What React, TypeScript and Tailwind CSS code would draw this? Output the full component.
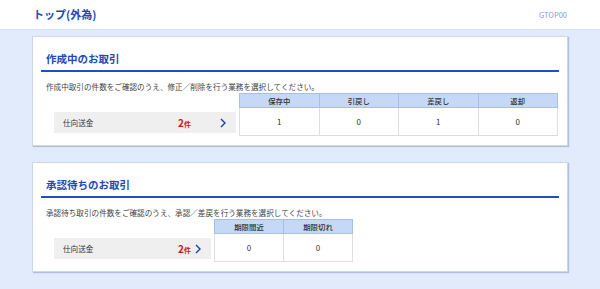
const jp = { fontFamily: '"Noto Sans CJK JP", "Noto Sans", sans-serif' }

interface Section {
  title: string
  desc: string
  boxWidth: string
  cols: { label: string; value: number }[]
  tableWidth: string
}

const sections: Section[] = [
  {
    title: "作成中のお取引",
    desc: "作成中取引の件数をご確認のうえ、修正／削除を行う業務を選択してください。",
    boxWidth: "w-[182px]",
    tableWidth: "w-[319px]",
    cols: [
      { label: "保存中", value: 1 },
      { label: "引戻し", value: 0 },
      { label: "差戻し", value: 1 },
      { label: "返却", value: 0 },
    ],
  },
  {
    title: "承認待ちのお取引",
    desc: "承認待ち取引の件数をご確認のうえ、承認／差戻を行う業務を選択してください。",
    boxWidth: "w-[157px]",
    tableWidth: "w-[139px]",
    cols: [
      { label: "期限間近", value: 0 },
      { label: "期限切れ", value: 0 },
    ],
  },
]

function Chevron() {
  return (
    <svg width="6" height="10" viewBox="0 0 6 10" fill="none" stroke="#1b3fae" strokeWidth="1.4">
      <polyline points="1,1 5,5 1,9" />
    </svg>
  )
}

function Card({ s }: { s: Section }) {
  return (
    <div className="h-[110px] bg-white border border-[#cdd6e4] shadow-[1px_1px_1px_rgba(90,110,150,0.35)] px-[8px]">
      <div className="pt-[15px] pb-[4px] border-b-2 border-[#1d4fc6] pl-[5px]">
        <div className="text-[10.5px] leading-[14px] font-bold text-[#2049b7]">{s.title}</div>
      </div>
      <div className="mt-[9px] pl-[5px] text-[7.6px] leading-[12px] text-[#444]">{s.desc}</div>
      <div className="flex items-end">
        <div className={`${s.boxWidth} ml-[13px] mb-[3px] h-[21px] bg-[#efefef] flex items-center text-[7.6px] text-[#333]`}>
          <span className="pl-[9px] w-[124px]">仕向送金</span>
          <span className="text-[#c8161d] font-bold text-[10px] leading-none">
            2<span className="text-[7px]">件</span>
          </span>
          <span className="ml-auto pr-[10px] flex items-center">
            <Chevron />
          </span>
        </div>
        <table className={`${s.tableWidth} ml-[3px] border-collapse table-fixed text-[7.4px] text-[#333]`}>
          <thead>
            <tr>
              {s.cols.map((c) => (
                <th key={c.label} className="h-[14px] bg-[#c5d8f5] border border-[#a7bfe6] font-medium leading-none p-0">
                  {c.label}
                </th>
              ))}
            </tr>
          </thead>
          <tbody>
            <tr>
              {s.cols.map((c) => (
                <td key={c.label} className="h-[28px] border border-[#dedede] text-center text-[8px] text-[#333] p-0">
                  {c.value}
                </td>
              ))}
            </tr>
          </tbody>
        </table>
      </div>
    </div>
  )
}

export default function App() {
  return (
    <div className="w-[600px] h-[289px] bg-[#e1ebfb] overflow-hidden" style={jp}>
      <div className="h-[30px] bg-white border-b border-[#d3e0f5] flex items-center justify-between pl-[33px] pr-[33px]">
        <span className="text-[11px] font-bold text-[#2049b7]">トップ(外為)</span>
        <span className="text-[7.5px] text-[#7f98de]">GTOP00</span>
      </div>
      <div className="pt-[6px] px-[32px] flex flex-col gap-[16px]">
        {sections.map((s) => (
          <Card key={s.title} s={s} />
        ))}
      </div>
    </div>
  )
}
